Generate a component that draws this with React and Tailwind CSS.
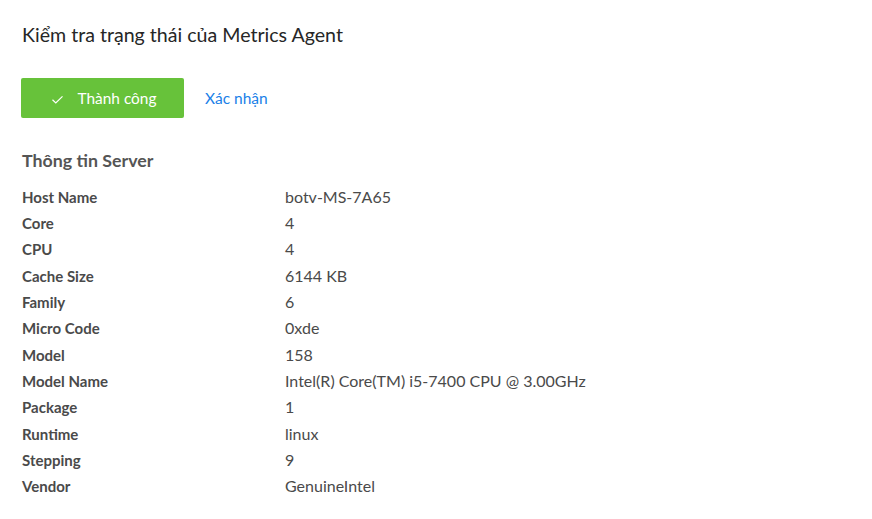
const rows = [
  ["Host Name", "botv-MS-7A65"],
  ["Core", "4"],
  ["CPU", "4"],
  ["Cache Size", "6144 KB"],
  ["Family", "6"],
  ["Micro Code", "0xde"],
  ["Model", "158"],
  ["Model Name", "Intel(R) Core(TM) i5-7400 CPU @ 3.00GHz"],
  ["Package", "1"],
  ["Runtime", "linux"],
  ["Stepping", "9"],
  ["Vendor", "GenuineIntel"],
];

export default function App() {
  return (
    <div className="min-h-[519px] w-full bg-white font-['Lato','Noto_Sans',sans-serif] text-[#4a4a4a]">
      <div className="px-[22px] pt-[22px]">
        <h2 className="text-[19.6px] leading-[26px] text-[#262626]">
          Kiểm tra trạng thái của Metrics Agent
        </h2>

        <div className="mt-[30px] flex items-center gap-[21px]">
          <button className="-ml-px flex h-[40px] w-[163px] items-center justify-center gap-[15px] rounded-[2px] bg-[#67c23a] pl-[3px] pt-[2px] text-[15.4px] text-white">
            <svg width="11" height="11" viewBox="0 0 11 11" fill="none" stroke="white" strokeWidth="1.2">
              <path d="M0.5 5.8 L3.8 9 L10.5 2.3" />
            </svg>
            Thành công
          </button>
          <a className="pt-[2px] text-[15.5px] text-[#1a7fe8]">Xác nhận</a>
        </div>

        <h3 className="mt-[29px] text-[17.8px] font-bold text-[#555]">Thông tin Server</h3>

        <div className="mt-[10px] flex flex-col">
          {rows.map(([k, v]) => (
            <div key={k} className="grid grid-cols-[263px_1fr] items-baseline leading-[26.35px]">
              <span className="text-[15px] font-bold">{k}</span>
              <span className="text-[16px]">{v}</span>
            </div>
          ))}
        </div>
      </div>
    </div>
  );
}
